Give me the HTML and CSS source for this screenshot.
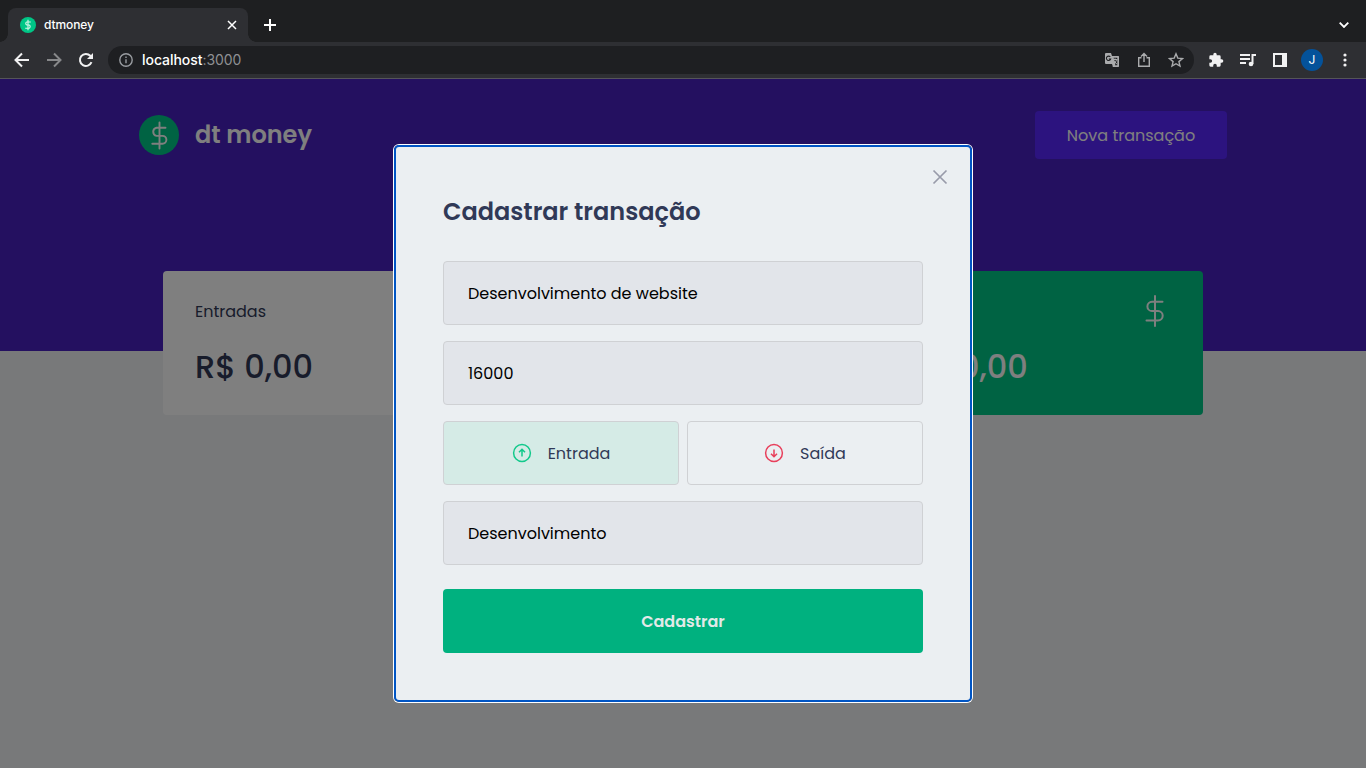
FILE: index.html
```html
<!DOCTYPE html>
<html lang="pt-BR">
<head>
<meta charset="utf-8">
<title>dtmoney</title>
<link rel="stylesheet" href="styles.css">
</head>
<body>
<div class="browser">
  <div class="tabs">
    <div class="tab">
      <svg class="favicon" viewBox="0 0 40 40"><circle cx="20" cy="20" r="20" fill="#00c686"/><path d="M20 7v26M27 12.500H17a4 4 0 0 0 0 7.500h6a4.500 4.500 0 0 1 0 8H13" fill="none" stroke="#d5f7ea" stroke-width="2.800"/></svg>
      <span class="tab-title">dtmoney</span>
      <svg class="tab-close" viewBox="0 0 10 10"><path d="M1 1l8 8M9 1L1 9"/></svg>
    </div>
    <svg class="new-tab" viewBox="0 0 12 12"><path d="M6 0v12M0 6h12"/></svg>
    <svg class="tab-menu" viewBox="0 0 10 6"><path d="M.7.7L5 5 9.300.7"/></svg>
  </div>
  <div class="toolbar">
    <svg class="ic back" viewBox="0 0 16 16"><path d="M15 8H2M8 1.500L1.500 8 8 14.500"/></svg>
    <svg class="ic forward" viewBox="0 0 16 16"><path d="M1 8h13M8 1.500L14.500 8 8 14.500"/></svg>
    <svg class="ic reload" viewBox="0 0 16 16"><path d="M13.500 10.200A6 6 0 1 1 12.300 3.800L14 5.500"/><path class="solid" d="M15 1v6H9z"/></svg>
    <div class="address">
      <svg class="info" viewBox="0 0 14 14"><circle cx="7" cy="7" r="6.200"/><path d="M7 6.300v4M7 3.500v1.600"/></svg>
      <span class="url"><b>localhost</b>:3000</span>
      <svg class="ad translate" viewBox="0 0 16 16"><path class="solid" d="M2 1h5l1 3h6a1 1 0 0 1 1 1v9a1 1 0 0 1-1 1H9l-1-3H2a1 1 0 0 1-1-1V2a1 1 0 0 1 1-1z"/><path d="M8.600 5H14v9H9.700l1-2z" fill="#1e1f22"/><path d="M6.300 4.900A2.200 2.200 0 1 0 6.700 7H4.800" stroke="#1e1f22" stroke-width="1.100"/><path d="M9 7.500h4.500M11 6.300v1.200M12.600 7.500c-.5 2-1.500 3.200-2.800 4M10 8.700l3 3.600" stroke="#aaabad" stroke-width="1"/></svg>
      <svg class="ad" viewBox="0 0 16 16"><path d="M5.500 5.700H2.700v8.500h10.600V5.700h-2.800M8 10V2M5 4.500l3-3 3 3"/></svg>
      <svg class="ad" viewBox="0 0 16 16"><path d="M8 1.800l1.800 4.300 4.700.4-3.600 3.100 1.100 4.500L8 11.700l-4 2.400 1.100-4.500-3.600-3.100 4.700-.4z"/></svg>
    </div>
    <svg class="ic ext" viewBox="0 0 24 24"><path class="solid" d="M20.500 11H19V7a2 2 0 0 0-2-2h-4V3.500a2.500 2.500 0 0 0-5 0V5H4a2 2 0 0 0-2 2v3.800h1.500a2.700 2.700 0 0 1 0 5.400H2V20a2 2 0 0 0 2 2h3.800v-1.500a2.700 2.700 0 0 1 5.400 0V22H17a2 2 0 0 0 2-2v-4h1.500a2.500 2.500 0 0 0 0-5z"/></svg>
    <svg class="ic media" viewBox="0 0 16 16"><path d="M0 3h10M0 7h10M0 11h6M12.500 12V3H16"/><circle class="solid" cx="11" cy="12" r="2.300"/></svg>
    <svg class="ic panel" viewBox="0 0 14 14"><path d="M1 1h12v12H1z"/><path class="solid" d="M9 0h5v14H9z"/></svg>
    <span class="avatar">J</span>
    <svg class="ic more" viewBox="0 0 4 14"><circle class="solid" cx="2" cy="2" r="1.600"/><circle class="solid" cx="2" cy="7" r="1.600"/><circle class="solid" cx="2" cy="12" r="1.600"/></svg>
  </div>
</div>

<div class="page">
  <header class="header">
    <div class="header-content">
      <svg class="logo" viewBox="0 0 40 40"><circle cx="20" cy="20" r="20" fill="#00c686"/><path d="M20.500 7.500v26M26.500 12.700h-9a4.200 4.200 0 0 0 0 8.200h6a3.900 3.900 0 0 1 0 7.800H13.300" fill="none" stroke="#fff" stroke-width="1.900" stroke-linecap="round"/></svg>
      <span class="brand">dt money</span>
      <button class="new">Nova transação</button>
    </div>
  </header>
  <main class="summary">
    <section class="card">
      <div class="card-top"><span>Entradas</span></div>
      <strong>R$ 0,00</strong>
    </section>
    <section class="card"></section>
    <section class="card total">
      <div class="card-top"><span>Total</span>
        <svg class="dollar" viewBox="0 0 32 32"><path d="M16 1v30M23.500 6.800h-10.500a4.600 4.600 0 0 0 0 9.200h6a4.700 4.700 0 0 1 0 9.400H7.500"/></svg>
      </div>
      <strong>R$ 0,00</strong>
    </section>
  </main>
</div>

<div class="overlay">
  <form class="modal">
    <svg class="close" viewBox="0 0 14 14"><path d="M.5.5l13 13M13.500.5l-13 13"/></svg>
    <h2>Cadastrar transação</h2>
    <div class="field"><span>Desenvolvimento de website</span></div>
    <div class="field"><span>16000</span></div>
    <div class="types">
      <div class="type active">
        <svg class="arrow up" viewBox="0 0 20 20"><circle cx="10" cy="10" r="8.400"/><path d="M10 13.500v-7M7 9.300l3-3 3 3"/></svg>
        <span>Entrada</span>
      </div>
      <div class="type">
        <svg class="arrow down" viewBox="0 0 20 20"><circle cx="10" cy="10" r="8.400"/><path d="M10 6.500v7M7 10.700l3 3 3-3"/></svg>
        <span>Saída</span>
      </div>
    </div>
    <div class="field"><span>Desenvolvimento</span></div>
    <div class="submit"><span>Cadastrar</span></div>
  </form>
</div>
</body>
</html>
```
FILE: styles.css
```css
* { box-sizing: border-box; margin: 0; padding: 0; }
body {
  width: 1366px; height: 768px; overflow: hidden; position: relative;
  font: 16px/24px Poppins, Inter, "Noto Sans", sans-serif;
  background: #f0f2f5; color: #303957;
}
svg { display: block; flex: none; }

.browser { height: 79px; background: #2e2f33; border-bottom: 1px solid #555559; color: #fff; font-family: Inter, sans-serif; }
.tabs { height: 42px; background: #1e1f21; display: flex; align-items: flex-start; padding: 8px 17px 0 8px; }
.tab { width: 240px; height: 34px; display: flex; align-items: center; padding: 0 12px; background: #2e2f33; border-radius: 8px 8px 0 0; position: relative; }
.tab::before, .tab::after { content: ""; position: absolute; bottom: 0; width: 8px; height: 8px; }
.tab::before { left: -8px; background: radial-gradient(circle at 0 0, #1e1f21 7.500px, #2e2f33 8px); }
.tab::after { right: -8px; background: radial-gradient(circle at 100% 0, #1e1f21 7.500px, #2e2f33 8px); }
.favicon { width: 16px; height: 16px; }
.tab-title { margin-left: 8px; font-size: 12px; line-height: 16px; font-weight: 500; letter-spacing: -.1px; }
.tab-close, .new-tab, .tab-menu { fill: none; stroke: #fff; }
.tab-close { width: 10px; height: 10px; margin-left: auto; margin-right: -1px; stroke-width: 1.500; }
.new-tab { width: 12px; height: 12px; margin: 11px 0 0 16px; stroke-width: 2; }
.tab-menu { width: 10px; height: 6px; margin: 14px 0 0 auto; stroke-width: 1.800; }
.toolbar { height: 36px; display: flex; align-items: center; padding: 0 14px; }
.ic { width: 16px; height: 16px; fill: none; stroke: #f1f1f2; stroke-width: 2; }
.solid { fill: currentColor; stroke: none; }
.ic .solid { fill: #f1f1f2; }
.ic.forward { stroke: #87888a; margin-left: 16px; }
.reload { margin-left: 16px; }
.address { width: 1086px; height: 28px; margin-left: 14px; padding: 0 10px 0 11px; border-radius: 14px; background: #1e1f22; display: flex; align-items: center; color: #aaabad; }
.info { width: 14px; height: 14px; fill: none; stroke: #999ca1; stroke-width: 1.400; }
.url { margin-left: 9px; margin-right: auto; font-size: 14px; line-height: 20px; color: #8f9093; letter-spacing: -.05px; }
.url b { color: #fff; font-weight: 500; }
.ad { width: 16px; height: 16px; margin-left: 16px; fill: none; stroke: #aaabad; stroke-width: 1.400; }
.translate .solid { fill: #aaabad; }
.ext { margin-left: 14px; }
.media { margin-left: 16px; }
.panel { width: 14px; height: 14px; margin-left: 17px; }
.avatar { width: 22px; height: 22px; margin-left: 14px; border-radius: 50%; background: #04529a; font-size: 12px; line-height: 22px; text-align: center; }
.ic.more { width: 4px; height: 14px; margin-left: 19.500px; }

.header { height: 272px; padding-top: 32px; background: #4820c0; }
.header-content { width: 1088px; height: 48px; margin: 0 auto; display: flex; align-items: center; color: #fff; }
.logo { width: 40px; height: 40px; }
.brand { margin-left: 16px; font-size: 24px; line-height: 36px; font-weight: 600; }
.new { width: 192px; height: 48px; margin-left: auto; padding-top: 2px; border: 0; border-radius: 4px; background: #5826ff; color: #fff; font: inherit; white-space: nowrap; }
.summary { width: 1040px; margin: -80px auto 0; display: grid; grid-template-columns: repeat(3, 1fr); gap: 32px; }
.card { height: 144px; padding: 24px 32px; border-radius: 4px; background: #fff; position: relative; }
.card-top { height: 32px; display: flex; align-items: center; justify-content: space-between; }
.card-top span, .field span, .type span, .submit span { padding-top: 2px; }
.card strong { display: block; margin-top: 16px; font-size: 32px; line-height: 48px; font-weight: 500; white-space: nowrap; }
.total { background: #00c686; color: #fff; }
.dollar { width: 32px; height: 32px; fill: none; stroke: #fff; stroke-width: 2; stroke-linecap: round; }

.overlay { position: absolute; inset: 79px 0 0; padding-top: 66px; background: rgba(0,0,0,.5); }
.modal { width: 576px; height: 556px; margin: 0 auto; padding: 49px 48px 47px; background: #ebeff2; border-radius: 5px; position: relative; }
.modal::after { content: ""; position: absolute; inset: 0 -1px -1px; border: 2px solid #0055c4; border-radius: 5px; box-shadow: 0 0 0 1px #fff; }
.close { position: absolute; top: 25px; right: 24px; width: 14px; height: 14px; fill: none; stroke: #989baa; stroke-width: 1.700; overflow: visible; }
h2 { margin-bottom: 31px; font-size: 24px; line-height: 36px; font-weight: 600; white-space: nowrap; }
.field { height: 64px; margin-bottom: 16px; padding: 0 24px; border: 1px solid #cfd1d4; border-radius: 4px; background: #e2e5ea; color: #000; display: flex; align-items: center; }
.types { display: grid; grid-template-columns: 1fr 1fr; gap: 8px; margin-bottom: 16px; }
.type { height: 64px; border: 1px solid #cfd1d4; border-radius: 4px; display: flex; align-items: center; justify-content: center; gap: 16px; }
.active { background: #d5ebe6; }
.arrow { width: 20px; height: 20px; fill: none; stroke-width: 1.500; }
.up { stroke: #12c98b; }
.down { stroke: #e83f5b; }
.submit { height: 64px; margin-top: 24px; border-radius: 4px; background: #00b17f; color: #e3e9e8; font-weight: 600; display: flex; align-items: center; justify-content: center; }
```
